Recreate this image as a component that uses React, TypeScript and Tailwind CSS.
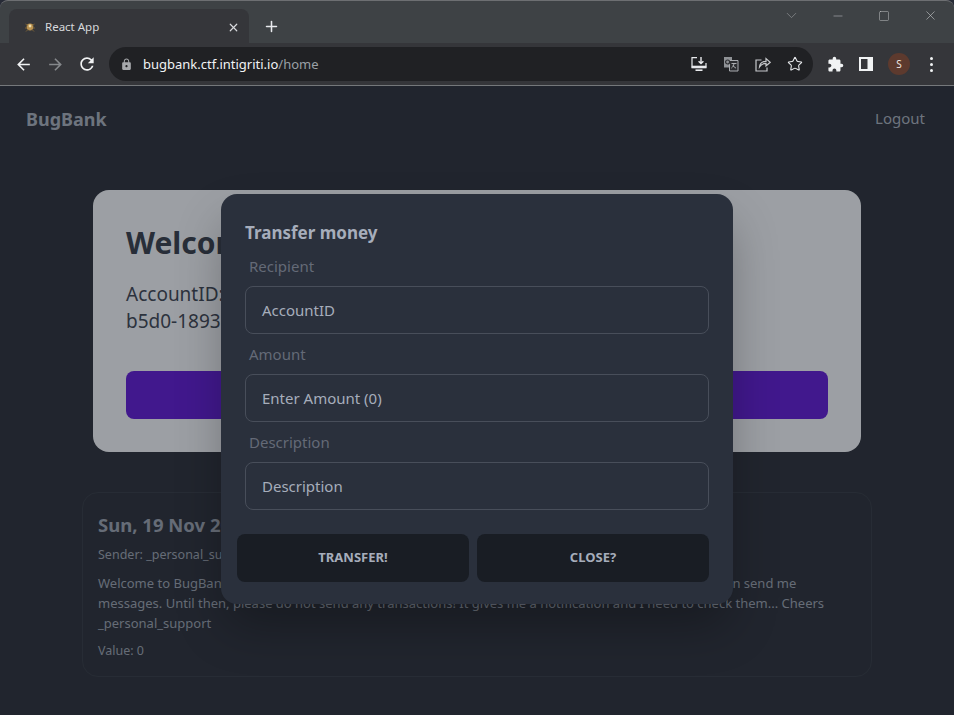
import React from 'react';
import { ChevronDown, Minus, Plus, Square, Star, X } from 'lucide-react';
import { MdArrowBack, MdArrowForward, MdExtension, MdLock, MdRefresh } from 'react-icons/md';

function Favicon() {
  return (
    <svg width="12" height="12" viewBox="0 0 12 12">
      <circle cx="6" cy="6" r="3.4" fill="#b8914f" />
      <circle cx="6" cy="5" r="1.4" fill="#f0dfae" />
      <path d="M1.5 3l2 1.5M10.5 3l-2 1.5M1 7h2M11 7H9M2 10.5l2-2M10 10.5l-2-2" stroke="#7a6238" strokeWidth="1" />
    </svg>
  );
}

function InstallIcon() {
  return (
    <svg width="16" height="16" viewBox="0 0 16 16" fill="none" stroke="#e8eaed" strokeWidth="1.2">
      <path d="M6 1.6H1v10h14V7" />
      <path d="M10 1v6.5M7.6 5.2L10 7.6l2.4-2.4" strokeWidth="1.4" />
      <path d="M4.5 14.2h7" strokeWidth="1.6" />
      <path d="M1 10h14v1.6H1z" fill="#e8eaed" strokeWidth="0.6" />
    </svg>
  );
}

function TranslateIcon() {
  return (
    <svg width="16" height="16" viewBox="0 0 16 16">
      <path d="M1 1h8v10.5H1z" fill="#8f9296" />
      <path d="M6.5 4.5h8.5v10.5H6.5z" fill="#2c2d30" stroke="#a9acb0" strokeWidth="1" />
      <circle cx="4.6" cy="6" r="2" fill="none" stroke="#2c2d30" strokeWidth="1.2" />
      <path d="M8.5 7.5h5M11 7.5c-.2 2.3-1.4 3.6-2.6 4.6M10 9.5c.6 1.1 1.6 2 3 2.6" fill="none" stroke="#b9bbbe" strokeWidth="0.9" />
    </svg>
  );
}

function ShareIcon() {
  return (
    <svg width="16" height="16" viewBox="0 0 16 16" fill="none" stroke="#c6c8cb" strokeWidth="1.2">
      <path d="M6.5 4H1v11h11v-3.5" />
      <path d="M4.5 11c.3-3.6 2.8-5.6 6.5-5.6V2.6L15.2 6.3 11 10V7.4C8.4 7.3 6.2 8.5 4.5 11z" />
    </svg>
  );
}

function PanelIcon() {
  return (
    <svg width="14" height="14" viewBox="0 0 14 14">
      <path d="M0 0h14v14H0z" fill="#f1f3f4" />
      <path d="M2 2h6.5v10H2z" fill="#35363a" />
    </svg>
  );
}

function BrowserChrome() {
  return (
    <div className="shrink-0 font-['Noto_Sans',sans-serif]">
      <div className="h-[43px] bg-[#3e4245] border-t border-[#6d6f72] rounded-t-[8px] flex items-end pl-[9px] relative">
        <div className="w-[240px] h-[34px] bg-[#35363a] rounded-t-[8px] flex items-center pl-[15px] pr-[9px] pt-[2px]">
          <Favicon />
          <span className="ml-[9px] text-[11.5px] text-[#d7d9dc] flex-1">React App</span>
          <X size={13} strokeWidth={2.2} color="#d8dadd" />
        </div>
        <div className="ml-[14px] mb-[8px]">
          <Plus size={17} strokeWidth={2.2} color="#e8eaed" />
        </div>
        <div className="ml-auto self-start mt-[6px] mr-[16px] flex items-center">
          <ChevronDown size={17} strokeWidth={1} color="#8f9295" className="mr-[31px]" />
          <Minus size={14} strokeWidth={1} color="#b9bbbe" className="mr-[33px]" />
          <Square size={12} strokeWidth={1} color="#c2c4c6" className="mr-[33px]" />
          <X size={15} strokeWidth={1} color="#c2c4c6" />
        </div>
      </div>
      <div className="h-[42px] bg-[#35363a] flex items-center border-b border-[#75787b] box-content">
        <div className="w-[109px] pl-[14px] flex items-center gap-[13px]">
          <MdArrowBack size={19} color="#f1f3f4" />
          <MdArrowForward size={19} color="#85888b" />
          <MdRefresh size={20} color="#f1f3f4" className="ml-[-1px]" />
        </div>
        <div className="w-[704px] h-[34px] bg-[#202124] rounded-full flex items-center pl-[11px] pr-[10px]">
          <MdLock size={13} color="#a6a8ab" />
          <span className="ml-[10px] pt-[1px] text-[13px] text-[#f1f3f4] flex-1">
            bugbank.ctf.intigriti.io<span className="text-[#9aa0a6]">/home</span>
          </span>
          <div className="flex items-center gap-[16px]">
            <InstallIcon />
            <TranslateIcon />
            <ShareIcon />
            <Star size={16} strokeWidth={1.6} color="#e8eaed" />
          </div>
        </div>
        <div className="flex items-center ml-[14px]">
          <MdExtension size={17} color="#f1f3f4" />
          <div className="ml-[15px]"><PanelIcon /></div>
          <div className="ml-[15px] w-[22px] h-[22px] rounded-full bg-[#5d3a2e] flex items-center justify-center text-[10px] text-[#efe6e2]">S</div>
          <div className="ml-[20px] flex flex-col gap-[3px]">
            <span className="w-[3px] h-[3px] rounded-full bg-[#f1f3f4]" />
            <span className="w-[3px] h-[3px] rounded-full bg-[#f1f3f4]" />
            <span className="w-[3px] h-[3px] rounded-full bg-[#f1f3f4]" />
          </div>
        </div>
      </div>
    </div>
  );
}

function Field({ label, placeholder }: { label: string; placeholder: string }) {
  return (
    <div>
      <div className="h-[40px] px-1 flex items-center text-[#646a77] text-[15px]">{label}</div>
      <div className="h-[48px] border border-[#484e5a] rounded-[8px] flex items-center px-4 text-[15px] text-[#a6adbb]">
        {placeholder}
      </div>
    </div>
  );
}

function TransferModal() {
  return (
    <div className="absolute inset-0 bg-[#191d24]/40 flex items-center justify-center">
      <div className="w-[512px] h-[410px] bg-[#2a303c] rounded-[16px] shadow-[0_25px_50px_-5px_rgba(0,0,0,0.3)] pt-[25px] mt-[-3px]">
        <div className="px-[24px]">
          <h3 className="text-[17px] font-bold leading-[27px] text-[#a6adbb]">Transfer money</h3>
          <Field label="Recipient" placeholder="AccountID" />
          <Field label="Amount" placeholder="Enter Amount (0)" />
          <Field label="Description" placeholder="Description" />
        </div>
        <div className="flex gap-2 pl-4 pr-6 mt-6">
          <button className="flex-1 h-[48px] bg-[#191d24] rounded-[8px] text-[13px] font-bold text-[#a6adbb]">TRANSFER!</button>
          <button className="flex-1 h-[48px] bg-[#191d24] rounded-[8px] text-[13px] font-bold text-[#a6adbb]">CLOSE?</button>
        </div>
      </div>
    </div>
  );
}

export default function App() {
  return (
    <div className="w-[954px] h-[715px] overflow-hidden flex flex-col bg-[#272b36] font-['Noto_Sans',sans-serif]">
      <BrowserChrome />
      <div className="relative flex-1">
        <nav className="h-[66px] pl-[26px] pr-[29px] flex items-center justify-between">
          <span className="text-[18px] font-bold text-[#a6adbb]">BugBank</span>
          <span className="text-[15px] text-[#a6adbb] pb-[2px]">Logout</span>
        </nav>
        <div className="mt-[38px] mx-[93px] h-[262px] bg-[#f4f6fa] rounded-[16px] pt-[35px] px-[33px] text-[#3a4150]">
          <h2 className="text-[30px] font-bold leading-[36px] text-[#333a48]">Welcome, user!</h2>
          <p className="mt-[20px] text-[19px] leading-[27px]">
            AccountID: 3f6c2a10-77de-4e1a-
            <br />
            b5d0-1893a4c2e7f1
          </p>
          <button className="mt-[36px] w-full h-[48px] rounded-[8px] bg-[#5c14d4]" />
        </div>
        <div className="mt-[40px] mx-[82px] h-[185px] border border-[#313641] rounded-[16px] px-[15px] pt-[18px] text-[#9aa1af]">
          <h3 className="text-[18.5px] font-bold leading-[28px]">Sun, 19 Nov 2023</h3>
          <p className="mt-[6px] text-[12.5px] leading-[20px]">Sender: _personal_support</p>
          <p className="mt-[8px] text-[13px] leading-[20px]">
            Welcome to BugBank! I am still working on our support desk, but as soon as I am done with it all, you can send me messages. Until then, please do not send any transactions! It gives me a notification and I need to check them... Cheers _personal_support
          </p>
          <p className="mt-[8px] text-[12.5px] leading-[20px]">Value: 0</p>
        </div>
        <TransferModal />
      </div>
    </div>
  );
}
